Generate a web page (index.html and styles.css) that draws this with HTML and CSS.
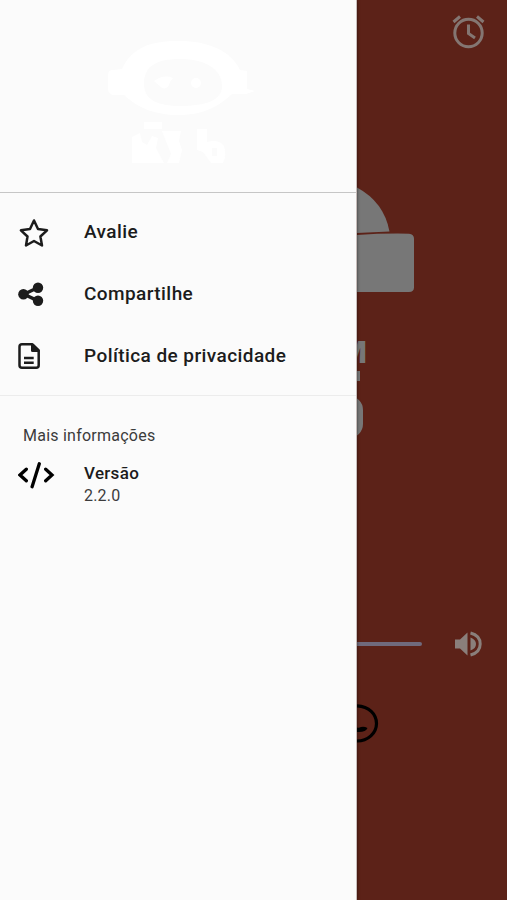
FILE: index.html
```html
<!DOCTYPE html>
<html lang="pt">
<head>
<meta charset="utf-8">
<title>Menu</title>
<link rel="stylesheet" href="styles.css">
</head>
<body>
<div class="screen">
  <nav class="drawer">
    <header class="brand">
      <svg class="robot" viewBox="0 0 150 130" width="150" height="130">
        <path fill-rule="evenodd" d="M16 33C26 12 43 5 73 5s52 10 61 29l7 1v18l8 2-9 3-14 0C113 70 98 79 73 79 47 79 31 71 18 59H7q-5-1-5-6V39q0-5 5-5zM38 48c0 16 14 22 36 22 27 0 42-6 42-20 0-17-17-27-42-27S38 31 38 48Z"/>
        <path d="M48 45q10-7 19-3l-3 4q-2 8-8 6z"/><circle cx="90" cy="47" r="5"/>
        <path d="M38 86h18v7H38zM26 101l8-4 2 9 5 3 5-9 6 2-2 10 8 15H26zM56 95h19l-2 10 3 9-3 13H61l4-9-4-10zM91 93h10v13q12-3 17 4 3 9-1 17h-12l-8-11-6-2zM106 112v8h5v-8z"/>
      </svg>
    </header>
    <ul class="actions">
      <li class="item">
        <svg class="icon" viewBox="0 0 40 40"><path class="line" d="M16 7.500l4 8.500 9 1.300-6.600 6.200 1.600 9-8-4.500-8 4.500 1.500-9-6.600-6.200 9.100-1.300z"/></svg>
        <span>Avalie</span>
      </li>
      <li class="item">
        <svg class="icon" viewBox="0 0 40 40"><path class="line thick" d="M20 13.500L6 20.200l14 6.700"/><circle cx="5.400" cy="20.200" r="5.200"/><circle cx="20" cy="13.700" r="5.200"/><circle cx="20" cy="26.800" r="5.200"/></svg>
        <span>Compartilhe</span>
      </li>
      <li class="item">
        <svg class="icon" viewBox="0 0 40 40"><path class="line" d="M4 8.300h10.500l6.200 6v15q0 2.500-2.500 2.500H4q-2.500 0-2.500-2.500V10.800q0-2.500 2.500-2.500z"/><path d="M13 8h2.500l6 6v2H14.500q-1.500 0-1.500-1.500z"/><path class="line" d="M6 21.900h9.700M6 26.700h9.700"/></svg>
        <span>Política de privacidade</span>
      </li>
    </ul>
    <section class="info">
      <h2>Mais informações</h2>
      <div class="version">
        <svg class="icon" viewBox="0 0 40 40"><path class="line code" d="M8.300 14.200l-6.300 5.800 6.300 5.800M21.300 8.800l-7.200 23M27.700 14.200l6.300 5.800-6.300 5.800"/></svg>
        <div><strong>Versão</strong><p>2.2.0</p></div>
      </div>
    </section>
  </nav>
  <main class="player">
    <svg class="alarm" viewBox="0 0 36 36" width="36" height="36"><circle cx="17.500" cy="20" r="13.700"/><path d="M17.500 11.500v9l6.500 4.500M2.500 9l6.500-5.500M26 3.500L32.500 9"/></svg>
    <svg class="mascot" viewBox="0 0 60 110" width="60" height="110"><path d="M0 2.500Q27 17 32.500 46.500L0 48z"/><path d="M0 50q26-1.800 52-1.300 5 .3 5 5v49q0 4-5 4.300H0z"/></svg>
    <div class="title"><span class="letter">M</span><i class="mark"></i><i class="curve"></i></div>
    <div class="volume">
      <span class="track"></span>
      <svg viewBox="0 0 30 30" width="30" height="30"><path d="M2 10.500h5l7.500-7v23l-7.500-7H2zM17.500 8.500q5.500 2 5.500 6.500t-5.500 6.500z"/><path class="wave" d="M17.500 4Q27.200 6.500 27.200 15T17.500 26"/></svg>
    </div>
    <svg class="whatsapp" viewBox="0 0 24 44" width="24" height="44"><path class="ring" d="M0 4.800C12 5.500 19.500 13 19.500 22.500S11 40 0 40"/><path d="M0 26.500q2 .8 4-.5 3-1 6.500 1Q9 31.500 0 31z"/></svg>
  </main>
</div>
</body>
</html>
```

FILE: styles.css
```css
* { box-sizing: border-box; }
body { margin: 0; font-family: Roboto, "Liberation Sans", sans-serif; color: #1c1c1c; }
h2, p, ul { margin: 0; padding: 0; }
svg { display: block; flex: none; }
.screen { display: flex; width: 507px; height: 900px; overflow: hidden; background: #5c2218; }
.drawer { width: 357px; background: #fbfbfb; border-right: 1px solid #c7bcba; box-shadow: 0 0 3px #0008; z-index: 1; }
.brand { height: 193px; padding: 36px 0 0 106px; border-bottom: 1px solid #c6c6c6; }
.robot { fill: #fff; }
.actions { list-style: none; height: 203px; padding-top: 8px; border-bottom: 1px solid #ececec; }
.item { display: flex; align-items: center; height: 62px; padding-left: 18px; font-size: 19px; font-weight: 500; letter-spacing: .42px; }
.item:first-child .icon { margin-top: 1px; }
.item span { margin-top: -1px; }
.icon { width: 40px; height: 40px; margin-right: 26px; fill: #1c1c1c; }
.line { fill: none; stroke: #1c1c1c; stroke-width: 2.5; stroke-linejoin: round; }
.thick { stroke-width: 3.4; }
.code { stroke: #000; stroke-width: 3.3; stroke-linecap: round; stroke-linejoin: miter; }
.info h2 { padding: 29px 0 0 23px; font-size: 16px; line-height: 21px; font-weight: 400; letter-spacing: .24px; color: #3c3c3c; }
.version { display: flex; padding: 9px 0 0 18px; font-size: 16px; line-height: 22px; letter-spacing: .2px; }
.version > div { padding-top: 7px; }
.version strong { display: block; height: 23px; font-weight: 500; font-size: 17px; letter-spacing: .3px; }
.version p { color: #3c3c3c; }
.player { display: flex; flex-direction: column; width: 150px; }
.alarm { margin: 13px 0 0 94px; fill: none; stroke: #847672; stroke-width: 3; }
.mascot { margin-top: 136px; fill: #777; }
.title { height: 105px; margin-top: 43px; color: #777; }
.letter { display: flex; justify-content: flex-end; width: 10px; height: 28px; font-size: 31px; font-weight: 900; line-height: 30px; }
.mark { display: block; width: 3px; height: 10px; margin-top: 5px; background: #777; }
.curve { display: block; width: 28px; height: 42px; margin: 15px 0 0 -22px; border: 8px solid #777; border-radius: 14px; }
.volume { display: flex; align-items: center; justify-content: space-between; height: 30px; margin-top: 186px; padding-right: 24px; }
.volume svg { fill: #8a7f7b; }
.wave { fill: none; stroke: #8a7f7b; stroke-width: 3; }
.track { width: 65px; height: 4px; border-radius: 0 2px 2px 0; background: #706a7c; }
.whatsapp { margin-top: 42px; fill: #000; }
.ring { fill: none; stroke: #000; stroke-width: 3.2; }
```
